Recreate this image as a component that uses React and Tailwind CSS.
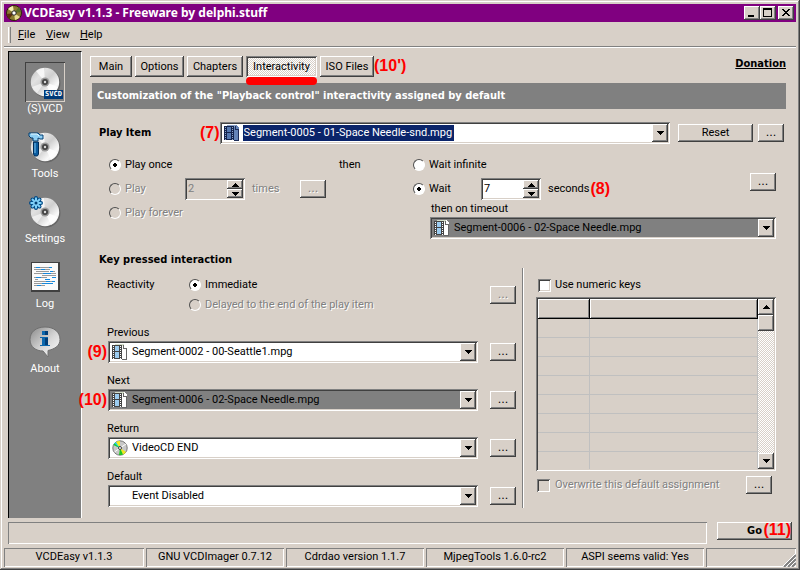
import React, { useState } from 'react';

// classic Windows bevels
const RAISED = 'bg-[#d8d0c8] shadow-[inset_-1px_-1px_#404040,inset_1px_1px_#fff,inset_-2px_-2px_#808080]';
const SUNKEN = 'shadow-[inset_1px_1px_#808080,inset_-1px_-1px_#fff,inset_2px_2px_#404040,inset_-2px_-2px_#d8d0c8]';
const PANEL = 'shadow-[inset_1px_1px_#808080,inset_-1px_-1px_#fff]';
const DITHER = 'bg-[repeating-conic-gradient(#fff_0_25%,#d8d0c8_0_50%)] bg-[length:2px_2px]';
const DISABLED = 'text-[#808080] [text-shadow:1px_1px_#fff]';
const BOLD = "font-['DejaVu_Sans_Condensed','DejaVu_Sans',sans-serif] font-bold";
const NOTE = "font-['Liberation_Sans',sans-serif] text-[16px] leading-4 font-bold text-[#ff0000]";

const Arrow = ({ up }) => (
  <svg width="7" height="4" viewBox="0 0 7 4" shapeRendering="crispEdges" aria-hidden="true">
    <path d={up ? 'M3 0h1v1h1v1h1v1h1v1H0V3h1V2h1V1h1z' : 'M0 0h7v1H6v1H5v1H4v1H3V3H2V2H1V1H0z'} fill="#000" />
  </svg>
);

const Disc = ({ children }) => (
  <svg width="34" height="34" viewBox="0 0 34 34" aria-hidden="true">
    <defs>
      <linearGradient id="disc" x1="0" y1="0" x2="1" y2="1">
        <stop offset="0" stopColor="#bdbdbd" />
        <stop offset="0.3" stopColor="#e2e2e2" />
        <stop offset="0.5" stopColor="#cfcfcf" />
        <stop offset="0.75" stopColor="#fafafa" />
        <stop offset="1" stopColor="#d0d0d0" />
      </linearGradient>
    </defs>
    <circle cx="18" cy="18" r="14.5" fill="#666" />
    <circle cx="17" cy="17" r="14.2" fill="url(#disc)" />
    <path d="M17 17L8 6a14 14 0 0 1 8-3z" fill="#fff" opacity="0.75" />
    <path d="M17 17l13 5a14 14 0 0 1-7 8z" fill="#fff" opacity="0.8" />
    <path d="M17 17L4 22a14 14 0 0 0 5 6z" fill="#fff" opacity="0.6" />
    <circle cx="17" cy="17" r="4.5" fill="#9a9a9a" />
    <circle cx="17" cy="17" r="3" fill="#444" />
    <circle cx="17" cy="17" r="1.2" fill="#ddd" />
    {children}
  </svg>
);

const SvcdIcon = () => (
  <div className="relative">
    <Disc />
    <span className="absolute -right-px bottom-0 h-[9px] w-[19px] bg-[#003a78] text-center font-['DejaVu_Sans_Mono',monospace] text-[7px] leading-[9px] font-bold text-white">SVCD</span>
  </div>
);

const ToolsIcon = () => (
  <Disc>
    <path d="M1 3h9l2 2h3v4h-3l-2-1v3H5V8H3L1 6z" fill="#8fd0f5" stroke="#003c70" />
    <path d="M3 4h6l2 2" stroke="#e6f7ff" fill="none" />
    <path d="M5.500 12h5v12l-1 2h-3l-1-2z" fill="#0a5ca0" stroke="#002c58" />
    <path d="M7 13v10" stroke="#7cc6f2" />
  </Disc>
);

const SettingsIcon = () => (
  <Disc>
    <g stroke="#004a86" strokeWidth="4" strokeLinecap="round">
      <path d="M8 3v10M3 8h10M4.500 4.500l7 7M11.500 4.500l-7 7" />
    </g>
    <g stroke="#7fd0f8" strokeWidth="2">
      <path d="M8 2.500v11M2.500 8h11M4 4l8 8M12 4l-8 8" />
    </g>
    <circle cx="8" cy="8" r="1.500" fill="#003c70" />
  </Disc>
);

const LogIcon = () => (
  <svg width="34" height="34" viewBox="0 0 34 34" shapeRendering="crispEdges" aria-hidden="true">
    <path d="M3 2h29v30H3z" fill="#404040" />
    <path d="M4 3h26v27H4z" fill="#fafafa" />
    <g transform="translate(0 .5)">
      <path d="M6 7h2m4 0h9M6 9h7m4 0h5M8 11h13m4 0h2M6 13h9m8 0h5M14 15h14M6 17h2m5 0h6M7 19h3M6 21h12m4 0h3M6 23h8M6 25h3m4 0h4" stroke="#999" />
      <path d="M8 7h4m9 0h3M13 9h4M22 11h3M15 13h8M8 17h5m11 0h4M17 19h5M18 21h4M24 21h3M14 23h11M9 25h4" stroke="#1488dd" />
    </g>
  </svg>
);

const AboutIcon = () => (
  <svg width="34" height="34" viewBox="0 0 34 34" aria-hidden="true">
    <defs>
      <linearGradient id="bubble" x1="0" y1="0" x2="1" y2="1">
        <stop offset="0" stopColor="#8a8a8a" />
        <stop offset="0.55" stopColor="#d8d8d8" />
        <stop offset="1" stopColor="#fff" />
      </linearGradient>
    </defs>
    <path d="M17 2C8 2 2 7 2 14.500S8 26 15 26l5 6v-6.500c7-1.500 12-5 12-11C32 7 26 2 17 2z" fill="url(#bubble)" stroke="#707070" />
    <path d="M14 6h6v4h-6zM12 12h8v8h2v1H12v-1h2v-7h-2z" fill="#0c67ad" />
    <path d="M17 6h3v4h-3zM17 13h3v7h-3z" fill="#003e78" />
  </svg>
);

const FilmIcon = ({ dark }) => (
  <svg width="16" height="16" viewBox="0 0 16 16" shapeRendering="crispEdges" aria-hidden="true">
    <path d="M3 0h9l3 3v12H3z" fill={dark ? '#6484b8' : '#fff'} />
    <path d="M3 0h9v2H3z" fill={dark ? '#88a0c8' : '#d5dfca'} />
    <path d="M11.500 1v3h3v11H10" fill="none" stroke={dark ? '#1c2c58' : '#666'} />
    <path d="M0 1h10v14H0z" fill={dark ? '#14244c' : '#444'} />
    <path d="M3 2h4v5H3zM3 8h4v6H3z" fill={dark ? '#5478b0' : '#9cccf0'} />
    <path d="M1.500 2v13M8.500 2v13" stroke={dark ? '#8ea6cc' : '#fff'} strokeDasharray="1 1" />
  </svg>
);

const DiscIcon = () => (
  <svg width="16" height="16" viewBox="0 0 16 16" aria-hidden="true">
    <circle cx="8" cy="8" r="7.200" fill="#c8c8c8" stroke="#777" />
    <path d="M8 8L1.500 5A7 7 0 0 1 4 2z" fill="#20d8e8" />
    <path d="M8 8L4 2a7 7 0 0 1 4-1z" fill="#f4ec20" />
    <path d="M8 8L1.500 5l1-1.500z" fill="#20c820" />
    <path d="M8 8l6 4a7 7 0 0 1-3 2.500z" fill="#f0e820" />
    <path d="M8 8l3 6.500a7 7 0 0 1-4 .5z" fill="#20c820" />
    <path d="M8 8l6-4M8 8L2.500 12" stroke="#fff" />
    <circle cx="8" cy="8" r="1.500" fill="#fff" stroke="#444" />
  </svg>
);

const AppIcon = () => (
  <svg width="16" height="16" viewBox="0 0 16 16" aria-hidden="true">
    <circle cx="8" cy="8" r="7.500" fill="#8a7a30" stroke="#2c2408" />
    <path d="M8 8L2 4a7 7 0 0 1 5-3z" fill="#f4ecb0" />
    <path d="M8 8l6 4a7 7 0 0 1-5 3z" fill="#e8dc90" />
    <path d="M8 8l5-6a7 7 0 0 1 2 5z" fill="#5a6c28" />
    <path d="M8 8l-5 6a7 7 0 0 1-2-5z" fill="#5c2c10" />
    <circle cx="8" cy="8" r="2.200" fill="#fff" stroke="#222" />
  </svg>
);

const Dots = ({ disabled, label }) => (
  <button disabled={disabled} aria-label={label} className={`h-[18px] w-[26px] shrink-0 font-['DejaVu_Sans',sans-serif] leading-4 ${RAISED} ${disabled ? DISABLED : ''}`}>
    ...
  </button>
);

const Radio = ({ name, label, disabled, checked }) => (
  <label className={`flex items-center gap-1 whitespace-nowrap ${disabled ? DISABLED : ''}`}>
    <input
      type="radio"
      name={name}
      disabled={disabled}
      defaultChecked={checked}
      className="size-3 appearance-none rounded-full border border-t-[#505050] border-r-white border-b-white border-l-[#505050] bg-white checked:bg-[radial-gradient(circle,#000_2px,#fff_2px)] disabled:bg-[#d8d0c8]"
    />
    {label}
  </label>
);

const Spinner = ({ value, label, disabled }) => (
  <div className={`flex h-[22px] w-[60px] p-[2px] ${SUNKEN} ${disabled ? '' : 'bg-white'}`}>
    <input aria-label={label} defaultValue={value} disabled={disabled} className="w-0 flex-1 bg-transparent pl-px text-black outline-none disabled:text-[#808080]" />
    <div className="flex w-4 flex-col">
      <button aria-label="Up" disabled={disabled} className={`flex flex-1 items-center justify-center ${RAISED}`}><Arrow up /></button>
      <button aria-label="Down" disabled={disabled} className={`flex flex-1 items-center justify-center ${RAISED}`}><Arrow /></button>
    </div>
  </div>
);

const Combo = ({ id, label, value, icon, gray, focused }) => (
  <div className={`relative flex h-[22px] min-w-0 flex-1 items-center gap-[3px] p-[2px] ${SUNKEN} ${gray ? 'bg-[#808080]' : 'bg-white'}`}>
    <span className="ml-[2px] w-4 shrink-0">{icon}</span>
    <select
      id={id}
      aria-label={label}
      className={`h-4 appearance-none px-px leading-4 outline-none ${focused ? 'bg-[#0a246a] text-white outline-1 outline-dotted -outline-offset-1 outline-[#f5db95]' : 'flex-1 bg-transparent'}`}
    >
      <option>{value}</option>
    </select>
    <span className={`pointer-events-none absolute top-[2px] right-[2px] flex h-[18px] w-4 items-center justify-center ${RAISED}`}>
      <Arrow />
    </span>
  </div>
);

const tabs = [
  { name: 'Main', width: 'w-[42px]' },
  { name: 'Options', width: 'w-[49px]' },
  { name: 'Chapters', width: 'w-[56px]' },
  { name: 'Interactivity', width: 'w-[71px]' },
  { name: 'ISO Files', width: 'w-[54px]' },
];

const sections = [
  { name: '(S)VCD', icon: SvcdIcon },
  { name: 'Tools', icon: ToolsIcon },
  { name: 'Settings', icon: SettingsIcon },
  { name: 'Log', icon: LogIcon },
  { name: 'About', icon: AboutIcon },
];

const keys = [
  { id: 'previous', name: 'Previous', value: 'Segment-0002 - 00-Seattle1.mpg', icon: <FilmIcon />, note: '(9)' },
  { id: 'next', name: 'Next', value: 'Segment-0006 - 02-Space Needle.mpg', icon: <FilmIcon />, gray: true, note: '(10)' },
  { id: 'return', name: 'Return', value: 'VideoCD END', icon: <DiscIcon /> },
  { id: 'default', name: 'Default', value: 'Event Disabled' },
];

const statuses = ['VCDEasy v1.1.3', 'GNU VCDImager 0.7.12', 'Cdrdao version 1.1.7', 'MjpegTools 1.6.0-rc2', 'ASPI seems valid: Yes'];

const TitleBar = () => (
  <header className="flex h-[18px] items-center bg-[#800080] pr-[2px] pl-[2px] text-white">
    <AppIcon />
    <h1 className="ml-[2px] flex-1 font-['Noto_Sans',sans-serif] text-[12px] font-bold">VCDEasy v1.1.3 - Freeware by delphi.stuff</h1>
    <button aria-label="Minimize" className={`h-[14px] w-4 ${RAISED}`}>
      <svg width="16" height="14" shapeRendering="crispEdges"><path d="M4 9h6v2H4z" /></svg>
    </button>
    <button aria-label="Maximize" className={`h-[14px] w-4 ${RAISED}`}>
      <svg width="16" height="14" shapeRendering="crispEdges"><path d="M3 2h9v9H3zM4 4v6h7V4z" fillRule="evenodd" /></svg>
    </button>
    <button aria-label="Close" className={`ml-[2px] h-[14px] w-4 ${RAISED}`}>
      <svg width="16" height="14" shapeRendering="crispEdges"><path d="M4 3h2v1h1v1h2V4h1V3h2v1h-1v1h-1v1H9v1h1v1h1v1h1v1h-2V9H9V8H7v1H6v1H4V9h1V8h1V7h1V6H6V5H5V4H4z" /></svg>
    </button>
  </header>
);

const MenuBar = () => (
  <nav className="flex h-[26px] items-center border-b border-white pl-1 shadow-[inset_0_-1px_#808080]">
    <span className="mr-[7px] h-4 w-[3px] border-r border-l border-r-[#808080] border-l-white" />
    <button className="w-7 text-left"><u>F</u>ile</button>
    <button className="w-[34px] text-left"><u>V</u>iew</button>
    <button className="text-left"><u>H</u>elp</button>
  </nav>
);

const Sidebar = () => (
  <aside className="flex w-[74px] shrink-0 flex-col items-center gap-[11px] border-t border-r border-l border-t-black border-r-white border-l-black bg-[#808080] pt-[10px] text-white">
    {sections.map(({ name, icon: Icon }, i) => (
      <button key={name} className="flex flex-col items-center">
        <span className={`flex size-10 items-center justify-center ${i === 0 ? 'shadow-[inset_1px_1px_#404040,inset_-1px_-1px_#d8d0c8]' : ''}`}>
          <Icon />
        </span>
        <span className="leading-[14px]">{name}</span>
      </button>
    ))}
  </aside>
);

const PlayItem = () => (
  <>
    <div className="mt-[13px] flex items-center pl-[9px]">
      <h2 className={`w-[101px] ${BOLD}`}>Play Item</h2>
      <span className={NOTE}>(7)</span>
      <Combo label="Play Item" value="Segment-0005 - 01-Space Needle-snd.mpg" icon={<FilmIcon dark />} focused />
      <button className={`ml-2 h-[18px] w-[75px] leading-4 ${RAISED}`}>Reset</button>
      <span className="mr-[2px] ml-[5px] flex"><Dots label="More play item options" /></span>
    </div>

    <div className="mt-[9px] flex pl-[19px]">
      <div className="grid grid-cols-[76px_67px_48px_39px_74px] grid-rows-[24px_24px_24px] items-center">
        <Radio name="play" label="Play once" checked />
        <span className="col-start-5">then</span>
        <div className="col-start-1"><Radio name="play" label="Play" disabled /></div>
        <Spinner label="Play times" value="2" disabled />
        <span className={DISABLED}>times</span>
        <Dots disabled label="Play count options" />
        <div className="col-start-1"><Radio name="play" label="Play forever" disabled /></div>
      </div>
      <div className="flex-1 pr-[10px]">
        <div className="flex justify-between">
          <div>
            <div className="flex h-6 items-center"><Radio name="wait" label="Wait infinite" /></div>
            <div className="flex h-6 items-center">
              <div className="w-[68px]"><Radio name="wait" label="Wait" checked /></div>
              <Spinner label="Wait seconds" value="7" />
              <span className="ml-[7px]">seconds</span>
              <span className={`ml-px ${NOTE}`}>(8)</span>
            </div>
          </div>
          <div className="mt-5"><Dots label="Wait options" /></div>
        </div>
        <div className="flex flex-col pl-[17px]">
          <label htmlFor="timeout" className="pl-px leading-4">then on timeout</label>
          <div className="flex">
            <Combo id="timeout" value="Segment-0006 - 02-Space Needle.mpg" icon={<FilmIcon />} gray />
          </div>
        </div>
      </div>
    </div>
  </>
);

const NumericKeys = () => (
  <section className="ml-3 w-60 shrink-0 pt-2">
    <label className="flex h-[18px] items-center gap-1 pl-[2px]">
      <input type="checkbox" className={`size-[13px] appearance-none bg-white ${SUNKEN}`} />
      Use numeric keys
    </label>
    <div className={`mt-[3px] flex h-[174px] p-[2px] ${SUNKEN}`}>
      <div className="flex-1 overflow-hidden">
        <table aria-label="Numeric keys" className="w-full table-fixed border-collapse">
          <thead>
            <tr className="h-[19px]">
              <th aria-label="Key" className="w-[51px] border-r border-b border-black shadow-[inset_1px_1px_#fff,inset_-1px_-1px_#808080]" />
              <th aria-label="Item" className="border-r border-b border-black shadow-[inset_1px_1px_#fff,inset_-1px_-1px_#808080]" />
            </tr>
          </thead>
          <tbody>
            {Array.from({ length: 8 }, (_, i) => (
              <tr key={i} className="h-[19px]">
                <td className="border-r border-b border-[#c0c0c0]" />
                <td className="border-r border-b border-[#c0c0c0]" />
              </tr>
            ))}
          </tbody>
        </table>
      </div>
      <div className={`flex w-4 flex-col ${DITHER}`}>
        <button aria-label="Scroll up" className={`flex h-4 items-center justify-center ${RAISED}`}><Arrow up /></button>
        <span className={`h-4 ${RAISED}`} />
        <button aria-label="Scroll down" className={`mt-auto flex h-4 items-center justify-center ${RAISED}`}><Arrow /></button>
      </div>
    </div>
    <div className="mt-[5px] flex items-center justify-between pr-1">
      <label className={`flex items-center gap-[5px] pl-px ${DISABLED}`}>
        <input type="checkbox" disabled className={`size-[13px] appearance-none ${SUNKEN}`} />
        Overwrite this default assignment
      </label>
      <Dots label="Assignment options" />
    </div>
  </section>
);

const KeyInteraction = () => (
  <>
    <h2 className={`mt-[13px] pl-[9px] leading-4 ${BOLD}`}>Key pressed interaction</h2>
    <div className="flex pr-[10px] pl-[17px]">
      <section className="flex-1 pt-[7px] pb-px">
        <div className="flex items-center justify-between">
          <div className="flex">
            <span className="w-[82px] leading-5">Reactivity</span>
            <div>
              <div className="flex h-5 items-center"><Radio name="reactivity" label="Immediate" checked /></div>
              <div className="flex h-5 items-center"><Radio name="reactivity" label="Delayed to the end of the play item" disabled /></div>
            </div>
          </div>
          <Dots disabled label="Reactivity options" />
        </div>
        <div className="mt-[10px] flex flex-col gap-[10px]">
          {keys.map((key) => (
            <div key={key.id}>
              <label htmlFor={key.id} className="block leading-4">{key.name}</label>
              <div className="relative flex items-center pl-px">
                {key.note && <span className={`absolute right-full ${NOTE}`}>{key.note}</span>}
                <Combo id={key.id} value={key.value} icon={key.icon} gray={key.gray} />
                <span className="ml-3 flex"><Dots label={`${key.name} options`} /></span>
              </div>
            </div>
          ))}
        </div>
      </section>
      <div className="ml-[6px] w-[2px] border-r border-l border-r-white border-l-[#808080]" />
      <NumericKeys />
    </div>
  </>
);

export default function App() {
  const [activeTab, setActiveTab] = useState('Interactivity');

  return (
    <div className="flex min-h-screen flex-col bg-[#d8d0c8] p-1 pb-[3px] font-['Roboto',sans-serif] text-[11px] leading-4 text-black shadow-[inset_-1px_-1px_#404040,inset_1px_1px_#d8d0c8,inset_-2px_-2px_#808080,inset_2px_2px_#fff]">
      <TitleBar />
      <MenuBar />
      <div className="flex flex-1 pt-[3px] pl-1">
        <Sidebar />
        <main className="min-w-0 flex-1 pt-[5px] pr-[10px] pb-2 pl-2">
          <div className="flex items-start gap-[3px]">
            {tabs.map((tab) => (
              <button
                key={tab.name}
                onClick={() => setActiveTab(tab.name)}
                className={`relative h-[21px] ${tab.width} ${activeTab === tab.name ? `${DITHER} ${SUNKEN}` : RAISED}`}
              >
                {tab.name}
                {tab.name === 'Interactivity' && <span className="absolute top-full left-0 h-2 w-full rounded-sm bg-[#ff0000]" />}
              </button>
            ))}
            <span className={`-ml-[3px] leading-5 ${NOTE}`}>(10')</span>
            <a href="#donation" className={`ml-auto underline ${BOLD}`}>Donation</a>
          </div>
          <div className={`mt-[6px] ml-[2px] flex h-[26px] items-center bg-[#808080] pl-[5px] text-white ${BOLD}`}>
            Customization of the "Playback control" interactivity assigned by default
          </div>
          <PlayItem />
          <KeyInteraction />
        </main>
      </div>

      <div className="mt-1 flex items-start gap-[10px] px-1">
        <div className={`h-[22px] flex-1 ${PANEL}`} />
        <button className={`relative h-[18px] w-[75px] ${BOLD} ${RAISED}`}>
          Go
          <span className={`absolute top-0 right-px ${NOTE}`}>(11)</span>
        </button>
      </div>

      <footer className="mt-1 flex gap-[2px]">
        {statuses.map((status) => (
          <span key={status} className={`h-[19px] w-[138px] text-center leading-[18px] first:w-[140px] ${PANEL}`}>{status}</span>
        ))}
        <span className={`relative h-[19px] flex-1 ${PANEL}`}>
          <svg className="absolute right-0 bottom-0" width="13" height="13" aria-hidden="true">
            <path d="M1 13L13 1M5 13L13 5M9 13L13 9" stroke="#808080" strokeWidth="2" />
            <path d="M0 12L12 0M4 12L12 4M8 12L12 8" stroke="#fff" />
          </svg>
        </span>
      </footer>
    </div>
  );
}
